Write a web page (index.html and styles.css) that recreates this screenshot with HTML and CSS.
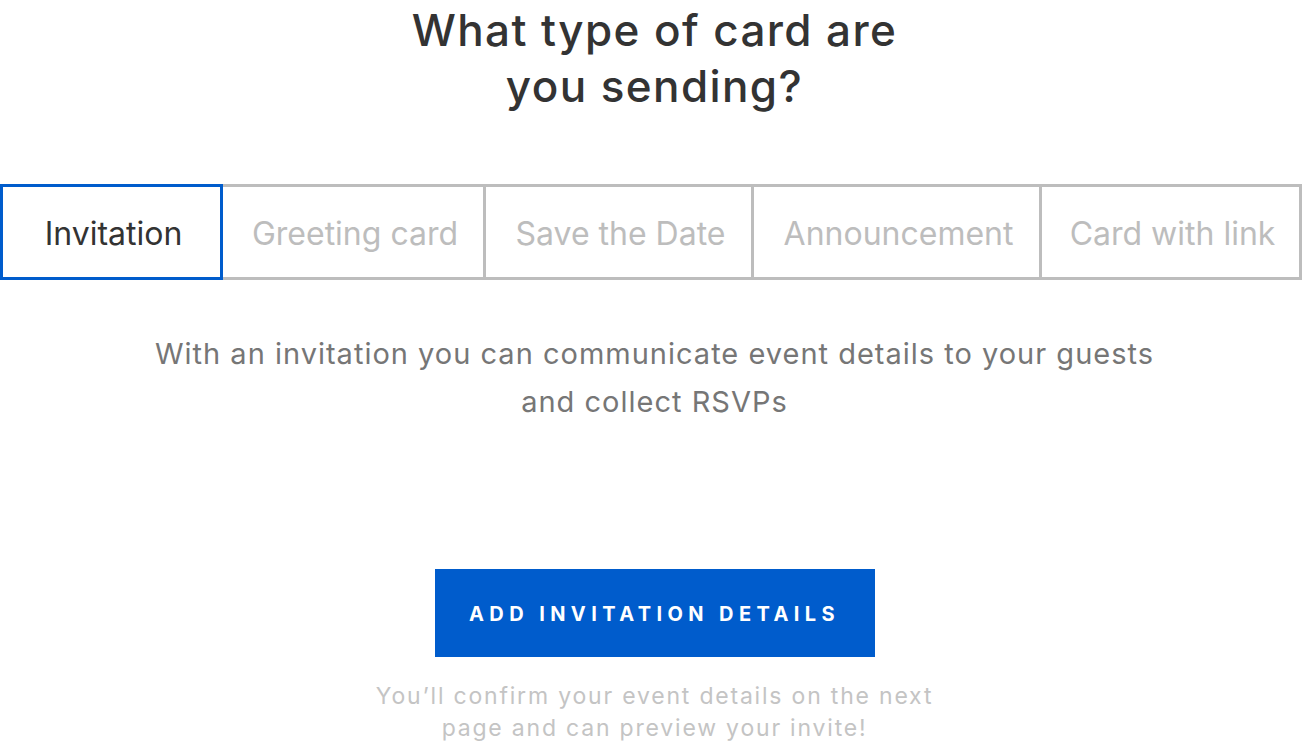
FILE: index.html
```html
<!DOCTYPE html>
<html>
<head>
<meta charset="utf-8">
<link rel="stylesheet" href="styles.css">
</head>
<body>
<div class="page">
  <h1 class="title">What type of card are<br>you sending?</h1>
  <div class="tabs">
    <div class="tab tab-active">Invitation</div>
    <div class="tab">Greeting card</div>
    <div class="tab">Save the Date</div>
    <div class="tab">Announcement</div>
    <div class="tab">Card with link</div>
  </div>
  <p class="desc">With an invitation you can communicate event details to your guests<br>and collect RSVPs</p>
  <div class="actions">
    <button class="cta">ADD INVITATION DETAILS</button>
    <p class="note">You’ll confirm your event details on the next<br>page and can preview your invite!</p>
  </div>
</div>
</body>
</html>
```
FILE: styles.css
```css
* { box-sizing: border-box; }
html, body { margin: 0; padding: 0; background: #fff; }
body { font-family: Inter, "Noto Sans", sans-serif; }
.page { width: 1302px; height: 744px; overflow: hidden; display: flex; flex-direction: column; align-items: center; }
.title { margin: 2px 0 0; padding-left: 7px; font-size: 44px; line-height: 56px; font-weight: 500; letter-spacing: 1.4px; color: #333; text-align: center; }
.tabs { margin-top: 70px; width: 100%; flex: 0 0 96px; display: grid; grid-template-columns: 223px 263px 268px 288px 1fr; }
.tab { display: flex; align-items: center; justify-content: center; border: 3px solid #bdbdbd; border-left-width: 0; font-size: 32px; color: #bdbdbd; white-space: nowrap; padding: 2px 0 0 4px; }
.tab-active { border: 3px solid #005ccc; color: #333; }
.desc { margin: 50px 0 0; padding-left: 7px; font-size: 29px; line-height: 48px; letter-spacing: 1px; color: #767676; text-align: center; }
.actions { margin-top: 143px; padding-left: 7px; display: flex; flex-direction: column; align-items: center; }
.cta { width: 440px; height: 88px; border: 0; background: #005ccc; color: #fff; font-family: inherit; font-size: 20px; font-weight: 700; letter-spacing: 5.4px; padding: 2px 0 0 0; }
.note { margin: 23px 0 0; font-size: 23px; line-height: 32px; letter-spacing: 1.8px; color: #c4c4c4; text-align: center; }
```
